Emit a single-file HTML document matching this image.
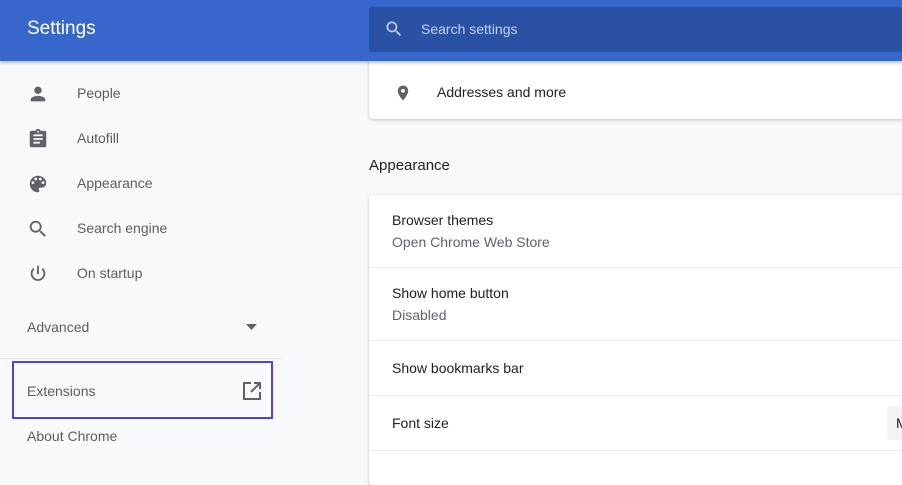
<!DOCTYPE html>
<html><head><style>
*{margin:0;padding:0;box-sizing:border-box}
body{width:902px;height:467px;overflow:hidden;background:#f8f9fa;font-family:"Liberation Sans",Arial,sans-serif;position:relative}
.hdr{position:absolute;left:0;top:0;width:902px;height:61px;background:#3767cb;box-shadow:0 2px 3px rgba(0,0,0,.25);z-index:2}
.hdr .t{position:absolute;left:27px;top:18px;color:#fff;font-size:19px}
.sb{position:absolute;left:369px;top:7px;width:533px;height:45px;background:#2a51a4;border-radius:2px}
.sb span{position:absolute;left:52px;top:14px;color:#c5d1ee;font-size:14px}
.sb svg{position:absolute;left:15px;top:12px}
.nav{position:absolute;left:0;font-size:14px;color:#5a5e63}
.nav svg{position:absolute;left:27px;top:0}
.nav span{position:absolute;left:77px;top:2px;white-space:nowrap}
.card{position:absolute;left:369px;width:540px;background:#fff;box-shadow:0 1px 3px rgba(60,64,67,.3);border-radius:4px}
.row{position:absolute;left:0;width:540px;border-top:1px solid #e8eaed}
.row .a{position:absolute;left:23px;font-size:14px;color:#202124}
.row .b{position:absolute;left:23px;font-size:14px;color:#5f6368}
</style></head><body>
<div class="hdr"><div class="t">Settings</div>
<div class="sb"><svg width="20" height="20" viewBox="0 0 24 24"><path fill="#c5d1ee" d="M15.5 14h-.8l-.3-.3A6.5 6.5 0 1 0 9.5 16a6.5 6.5 0 0 0 4.2-1.6l.3.3v.8l5 5 1.5-1.5-5-5zm-6 0a4.5 4.5 0 1 1 0-9 4.5 4.5 0 0 1 0 9z"/></svg><span>Search settings</span></div></div>

<div class="nav" style="top:83px"><svg width="22" height="22" viewBox="0 0 24 24"><path fill="#5f6368" d="M12 12a4 4 0 1 0 0-8 4 4 0 0 0 0 8zm0 2c-2.7 0-8 1.3-8 4v2h16v-2c0-2.7-5.3-4-8-4z"/></svg><span>People</span></div>
<div class="nav" style="top:128px"><svg width="22" height="22" viewBox="0 0 24 24"><path fill="#5f6368" d="M19 3h-4.2A3 3 0 0 0 12 1a3 3 0 0 0-2.8 2H5a2 2 0 0 0-2 2v14a2 2 0 0 0 2 2h14a2 2 0 0 0 2-2V5a2 2 0 0 0-2-2zm-7 0a1 1 0 1 1 0 2 1 1 0 0 1 0-2zm2 14H7v-2h7v2zm3-4H7v-2h10v2zm0-4H7V7h10v2z"/></svg><span>Autofill</span></div>
<div class="nav" style="top:173px"><svg width="22" height="22" viewBox="0 0 24 24"><path fill="#5f6368" d="M12 3a9 9 0 0 0 0 18 1.5 1.5 0 0 0 1.1-2.5 1.5 1.5 0 0 1 1.1-2.5H16a5 5 0 0 0 5-5c0-4.4-4-8-9-8zm-5.5 9a1.5 1.5 0 1 1 0-3 1.5 1.5 0 0 1 0 3zm3-4a1.5 1.5 0 1 1 0-3 1.5 1.5 0 0 1 0 3zm5 0a1.5 1.5 0 1 1 0-3 1.5 1.5 0 0 1 0 3zm3 4a1.5 1.5 0 1 1 0-3 1.5 1.5 0 0 1 0 3z"/></svg><span>Appearance</span></div>
<div class="nav" style="top:218px"><svg width="22" height="22" viewBox="0 0 24 24"><path fill="#5f6368" d="M15.5 14h-.8l-.3-.3A6.5 6.5 0 1 0 9.5 16a6.5 6.5 0 0 0 4.2-1.6l.3.3v.8l5 5 1.5-1.5-5-5zm-6 0a4.5 4.5 0 1 1 0-9 4.5 4.5 0 0 1 0 9z"/></svg><span>Search engine</span></div>
<div class="nav" style="top:263px"><svg width="22" height="22" viewBox="0 0 24 24"><path fill="none" stroke="#5f6368" stroke-width="2" d="M12 3v9M7.5 6.2A7 7 0 1 0 16.5 6.2"/></svg><span>On startup</span></div>
<div class="nav" style="top:317px"><span style="left:27px">Advanced</span></div>
<svg style="position:absolute;left:246px;top:324px" width="11" height="6"><path d="M0 0h11L5.5 6z" fill="#5f6368"/></svg>
<div style="position:absolute;left:0;top:358px;width:281px;height:1px;background:#e0e0e0"></div>
<div style="position:absolute;left:12px;top:361px;width:261px;height:58px;border:2px solid #5b3fd4"></div>
<div class="nav" style="top:381px"><span style="left:27px">Extensions</span></div>
<svg style="position:absolute;left:243px;top:382px" width="18" height="18" viewBox="0 0 18 18"><path fill="none" stroke="#5f6368" stroke-width="2" d="M8 1H1v16h16v-7M11 1h6v6M17 1L8 10"/></svg>
<div class="nav" style="top:426px"><span style="left:27px">About Chrome</span></div>

<div class="card" style="top:58px;height:61px;border-radius:0 0 4px 4px">
<svg style="position:absolute;left:25px;top:24px" width="18" height="22" viewBox="0 0 24 24"><path fill="#5f6368" d="M12 2a7 7 0 0 0-7 7c0 5.3 7 13 7 13s7-7.7 7-13a7 7 0 0 0-7-7zm0 9.5a2.5 2.5 0 1 1 0-5 2.5 2.5 0 0 1 0 5z"/></svg>
<div style="position:absolute;left:68px;top:26px;font-size:14px;color:#202124">Addresses and more</div></div>
<div style="position:absolute;left:369px;top:157px;font-size:15px;color:#202124">Appearance</div>
<div class="card" style="top:195px;height:290px">
<div class="row" style="top:0;border:none"><div class="a" style="top:17px">Browser themes</div><div class="b" style="top:39px">Open Chrome Web Store</div></div>
<div class="row" style="top:72px"><div class="a" style="top:17px">Show home button</div><div class="b" style="top:39px">Disabled</div></div>
<div class="row" style="top:145px"><div class="a" style="top:19px">Show bookmarks bar</div></div>
<div class="row" style="top:200px"><div class="a" style="top:19px">Font size</div>
<div style="position:absolute;left:518px;top:10px;width:40px;height:34px;background:#f1f3f4;border-radius:4px;font-size:14px;color:#202124;padding:9px 0 0 9px">M</div></div>
<div class="row" style="top:255px"></div>
</div>
</body></html>
